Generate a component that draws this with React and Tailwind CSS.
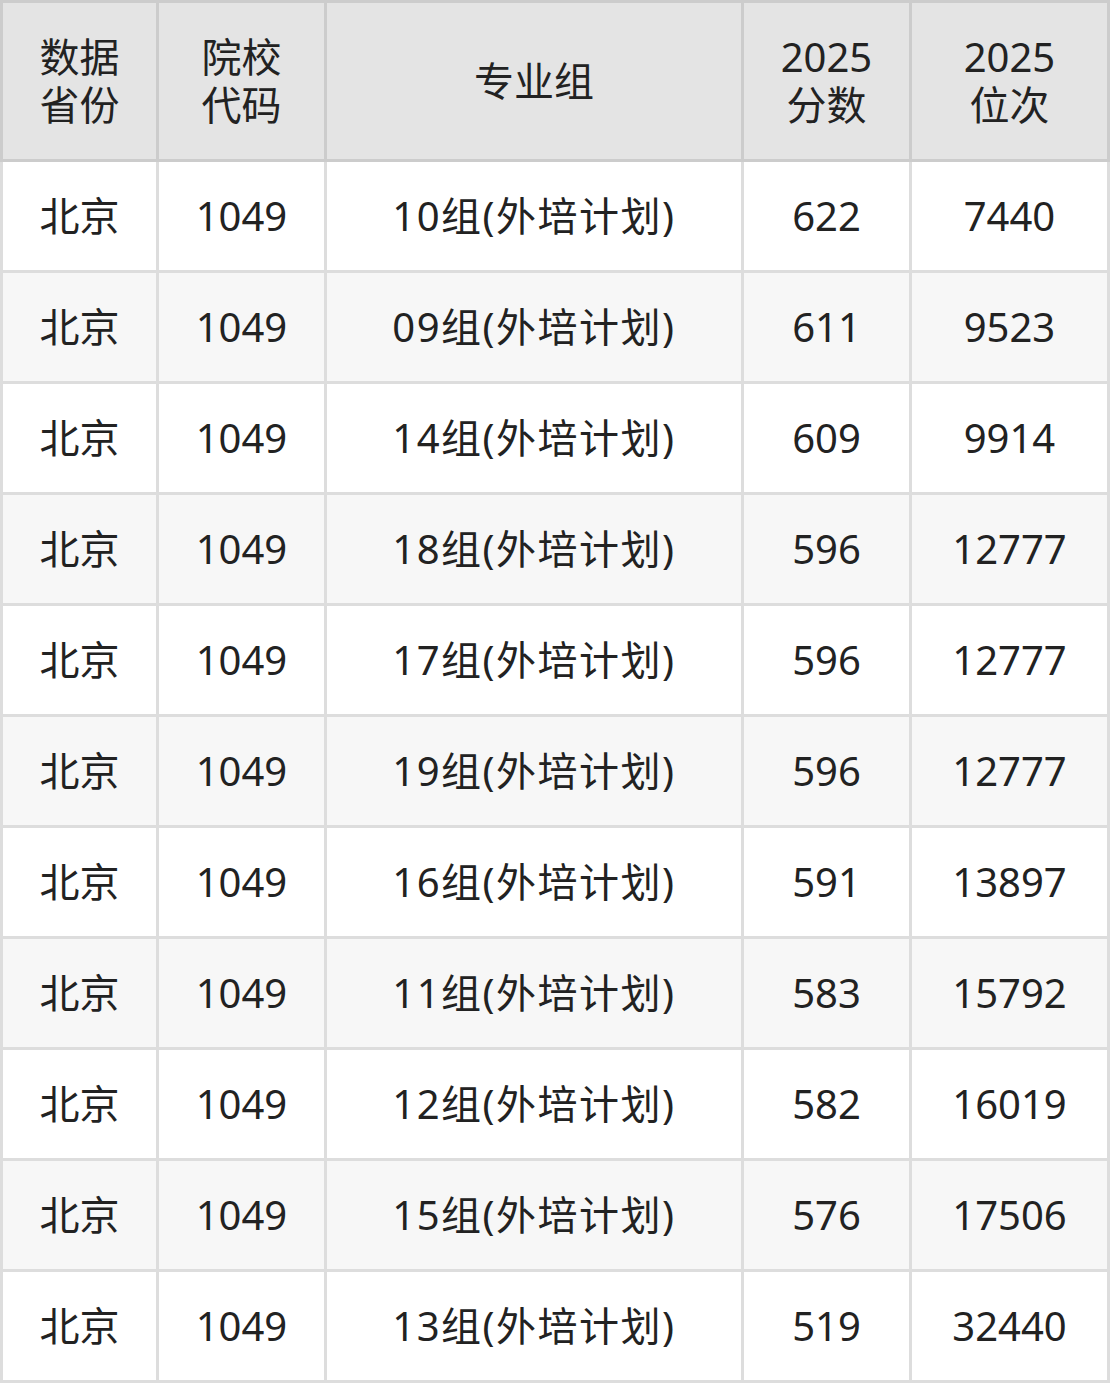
import React from 'react';

const rows = [
  ['北京', '1049', '10组(外培计划)', '622', '7440'],
  ['北京', '1049', '09组(外培计划)', '611', '9523'],
  ['北京', '1049', '14组(外培计划)', '609', '9914'],
  ['北京', '1049', '18组(外培计划)', '596', '12777'],
  ['北京', '1049', '17组(外培计划)', '596', '12777'],
  ['北京', '1049', '19组(外培计划)', '596', '12777'],
  ['北京', '1049', '16组(外培计划)', '591', '13897'],
  ['北京', '1049', '11组(外培计划)', '583', '15792'],
  ['北京', '1049', '12组(外培计划)', '582', '16019'],
  ['北京', '1049', '15组(外培计划)', '576', '17506'],
  ['北京', '1049', '13组(外培计划)', '519', '32440'],
];

const headers = [
  ['数据', '省份'],
  ['院校', '代码'],
  ['专业组'],
  ['2025', '分数'],
  ['2025', '位次'],
];

export default function App() {
  return (
    <div
      className="w-[1110px] text-[#222222] text-[40px]"
      style={{ fontFamily: '"Noto Sans", "Noto Sans CJK SC", sans-serif' }}
    >
      {/* header */}
      <div className="grid grid-cols-[153px_165px_414px_165px_195px] gap-x-[3px] bg-[#cccccc] p-[3px]">
        {headers.map((h, i) => (
          <div key={i} className="h-[156px] bg-[#e4e4e4] flex flex-col items-center justify-center">
            {h.map((line, j) => (
              <div key={j} className="h-[48px] leading-[48px]">{line}</div>
            ))}
          </div>
        ))}
      </div>

      {/* body */}
      <div className="grid grid-cols-[153px_165px_414px_165px_195px] gap-[3px] bg-[#dddddd] px-[3px] pb-[3px]">
        {rows.map((r, i) =>
          r.map((cell, j) => (
            <div
              key={i + '-' + j}
              className={
                'h-[108px] flex items-center justify-center leading-none ' +
                (j === 2 ? 'tracking-[1.5px] ' : '') +
                (i % 2 === 0 ? 'bg-white' : 'bg-[#f7f7f7]')
              }
            >
              {cell}
            </div>
          ))
        )}
      </div>
    </div>
  );
}
